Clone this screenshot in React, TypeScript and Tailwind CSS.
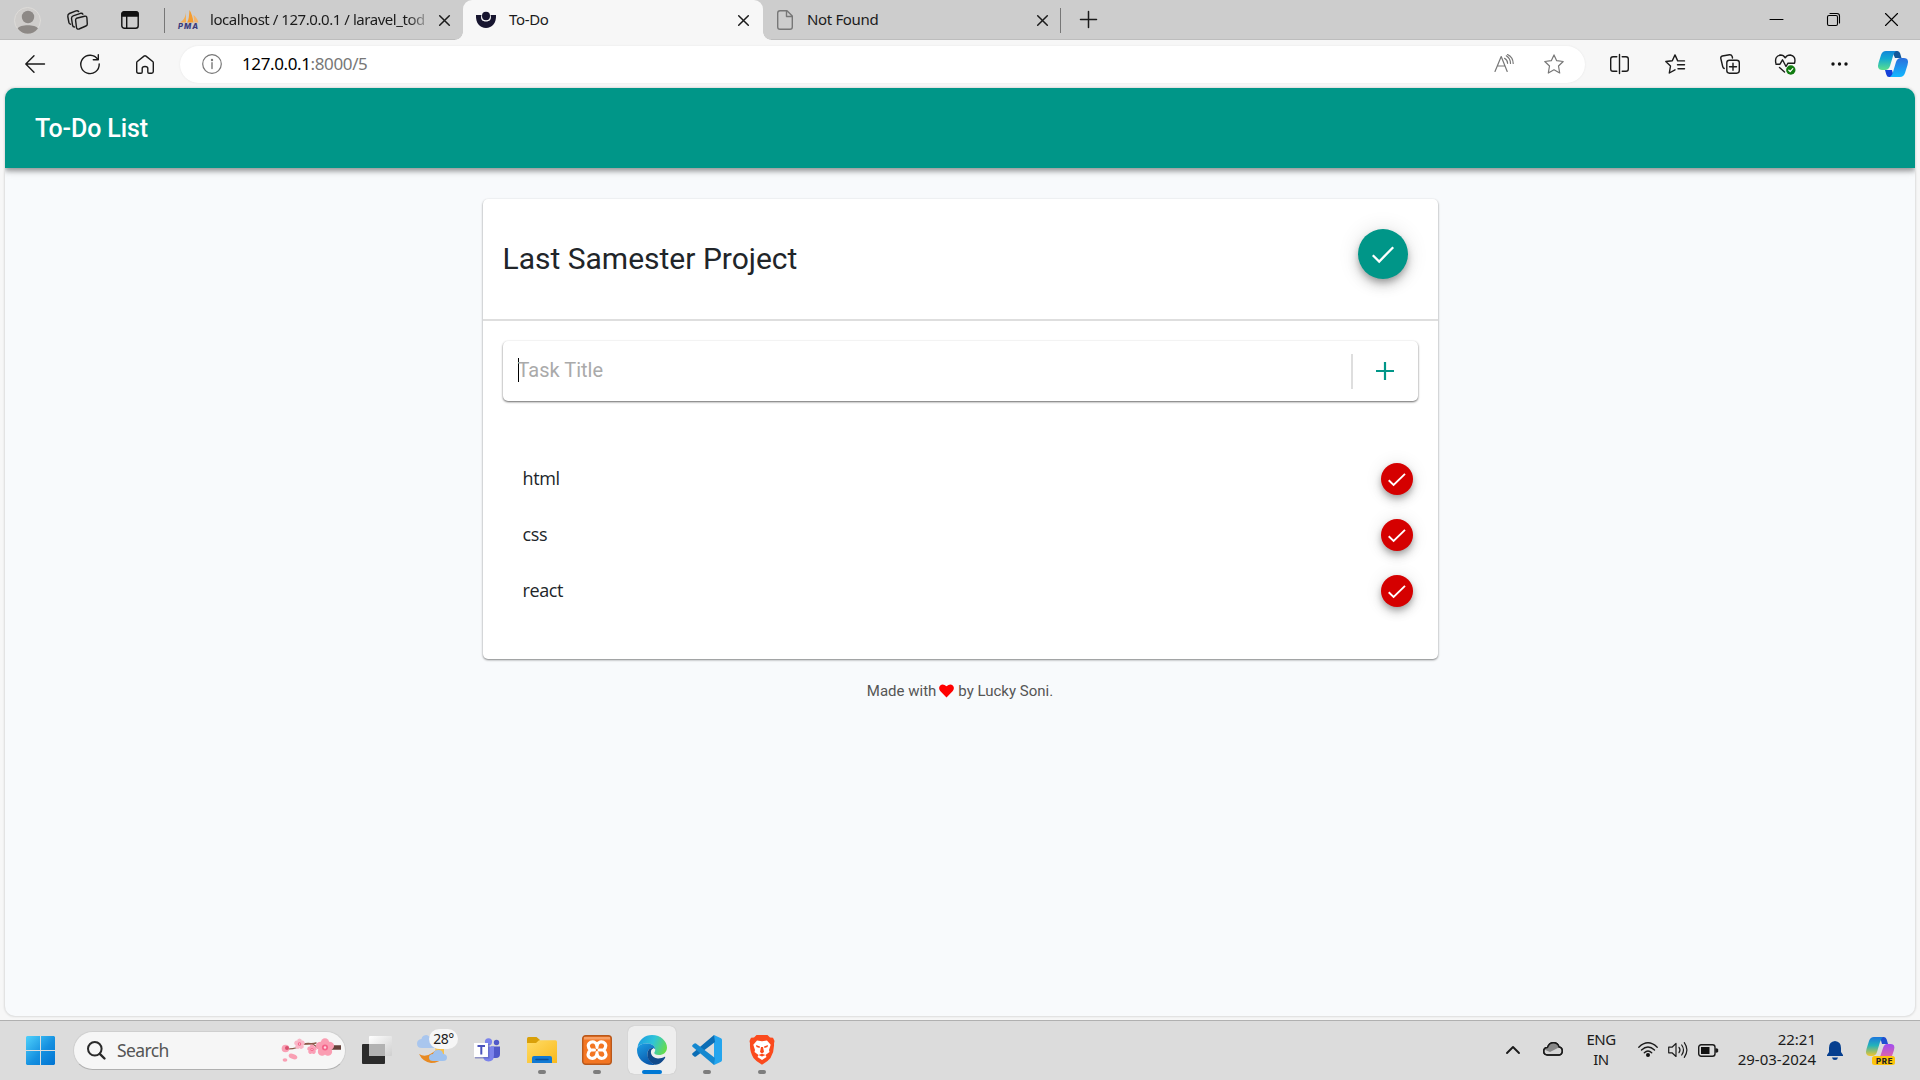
import React from "react";

type IconProps = { w: number; h: number; className?: string; children: React.ReactNode };

function Icon({ w, h, className = "", children }: IconProps) {
  return (
    <svg
      width={w}
      height={h}
      viewBox={`0 0 ${w} ${h}`}
      fill="none"
      stroke="currentColor"
      strokeWidth={1.4}
      strokeLinecap="round"
      strokeLinejoin="round"
      className={`shrink-0 overflow-visible ${className}`}
    >
      {children}
    </svg>
  );
}

function CloseX({ className = "" }: { className?: string }) {
  return (
    <Icon w={11} h={11} className={className}>
      <path d="M0.7 0.7L10.3 10.3M10.3 0.7L0.7 10.3" strokeWidth={1.5} />
    </Icon>
  );
}

function TabStrip() {
  return (
    <div className="flex h-10 items-center bg-[#cdcdcd] text-[15px] text-[#1b1b1b] shadow-[inset_0_-1px_0_#bdbdbd]">
      <Icon w={27} h={27} className="ml-[14px]">
        <circle cx="13.5" cy="13.5" r="13" fill="#cfcdcb" stroke="#dedcd9" strokeWidth={1} />
        <circle cx="14" cy="10" r="6.2" fill="#8d8986" stroke="none" />
        <path d="M3.6 21.5C6 17.3 21.5 17.3 24 21.5C19 28.5 8.500 28.500 3.600 21.500Z" fill="#8d8986" stroke="none" />
      </Icon>
      <Icon w={21} h={20} className="ml-[26px]">
        <path d="M9.500 8.300L17.500 6.200Q19.600 5.800 19.900 7.800L20.300 14Q20.300 15.500 18.900 16L12 19Q9.800 19.600 9.500 17.500L8.600 10.300Q8.500 8.700 9.500 8.300Z" />
        <path d="M7.500 17Q5.900 17 5.600 15.500L4.500 8.500Q4.400 6.400 6.200 5.800L13.500 3.300Q15.300 2.900 15.900 4.200" />
        <path d="M3.500 14.200Q2.100 13.800 1.900 12.500L0.800 6.500Q0.600 4.300 2.400 3.500L9 0.900Q10.900 0.400 11.700 1.600" />
      </Icon>
      <Icon w={18} h={18} className="ml-[33px]">
        <rect x="0.8" y="0.8" width="16.400" height="16.400" rx="2.500" stroke="#111" />
        <path d="M1 5V3Q1 1 3 1H15Q17 1 17 3V5Z" fill="#111" stroke="#111" />
        <path d="M5.700 5.500V17" stroke="#111" />
      </Icon>
      <div className="ml-[25px] h-[25px] w-px bg-[#777]" />
      <Icon w={21} h={20} className="ml-[13px]">
        <path d="M8 0.500C8.200 5 6.500 10 2 12.500H8Z" fill="#f3ae54" stroke="none" />
        <path d="M11.500 0C11 5 11 10 9 12.500H15.500C15 8 13.500 3 11.500 0Z" fill="#f59c2e" stroke="none" />
        <path d="M15.500 5C16 9 16 11 16.500 12.500H20.500C19.500 9 17.500 6.500 15.500 5Z" fill="#f5b468" stroke="none" />
        <text x="0" y="19" fill="#3b3c7c" stroke="none" fontSize="7.600" fontWeight="800" fontStyle="italic" fontFamily="Inter, sans-serif" textLength="20">PMA</text>
      </Icon>
      <div className="mt-[-2px] ml-[11px] w-[220px] whitespace-nowrap [mask-image:linear-gradient(to_right,black_198px,transparent_222px)]">
        <span className="tracking-[-0.450px]">localhost / 127.0.0.1 / laravel_tod</span>
      </div>
      <CloseX className="ml-[9px]" />
      <div className="relative ml-[13px] flex h-10 w-[300px] items-center rounded-t-[9px] bg-[#f7f7f7]">
        <div className="absolute bottom-0 -left-2 size-2 bg-[radial-gradient(circle_at_top_left,#cdcdcd_7.500px,#f7f7f7_8px)]" />
        <div className="absolute -right-2 bottom-0 size-2 bg-[radial-gradient(circle_at_top_right,#cdcdcd_7.500px,#f7f7f7_8px)]" />
        <Icon w={20} h={17} className="ml-[13px]">
          <path d="M0 3H5.500C4 7.500 6.500 9.500 10 9.500S16 7.500 14.500 3H20C20.500 11 16 16 10 16S-0.500 11 0 3Z" fill="#17152f" stroke="none" />
          <ellipse cx="10" cy="4" rx="4" ry="4.200" fill="#17152f" stroke="none" />
        </Icon>
        <span className="mt-[-2px] ml-[13px] tracking-[-0.350px]">To-Do</span>
        <CloseX className="mr-[14px] ml-auto" />
      </div>
      <div className="flex w-[297px] items-center">
        <Icon w={16} h={20} className="ml-[14px] text-[#777]">
          <path d="M3 0.700H10L15.300 6V17Q15.300 19.300 13 19.300H3Q0.700 19.300 0.700 17V3Q0.700 0.700 3 0.700ZM9.500 1V6.500H15" />
        </Icon>
        <span className="mt-[-2px] ml-[14px] tracking-[-0.350px]">Not Found</span>
        <CloseX className="mr-[12px] ml-auto" />
      </div>
      <div className="h-[25px] w-px bg-[#777]" />
      <Icon w={17} h={17} className="mt-[-1px] ml-[19px]">
        <path d="M8.500 0.500V16.500M0.500 8.500H16.500" strokeWidth={1.500} />
      </Icon>
      <Icon w={13} h={13} className="mt-[-1px] ml-auto">
        <path d="M0 6.500H13" strokeWidth={1} stroke="#000" />
      </Icon>
      <Icon w={13} h={13} className="mt-[-1px] ml-[44px]">
        <rect x="0.500" y="2.500" width="10" height="10" rx="1.500" strokeWidth={1.100} stroke="#000" />
        <path d="M3 0.500H10Q12.500 0.500 12.500 3V10" strokeWidth={1.100} stroke="#000" />
      </Icon>
      <Icon w={13} h={13} className="mt-[-1px] mr-[22px] ml-[45px]">
        <path d="M0.500 0.500L12.500 12.500M12.500 0.500L0.500 12.500" strokeWidth={1.100} stroke="#000" />
      </Icon>
    </div>
  );
}

function Toolbar() {
  return (
    <div className="flex h-12 items-center bg-[#f7f7f7] text-[#1b1b1b]">
      <Icon w={20} h={18} className="ml-[25px]">
        <path d="M9 0.700L0.800 9L9 17.300M1 9H19.500" />
      </Icon>
      <Icon w={20} h={20} className="ml-[35px]">
        <path d="M17.800 5.500A9.200 9.200 0 1 0 19.200 10M18.300 0.700V5.800H13.300" />
      </Icon>
      <Icon w={18} h={19} className="ml-[36px]">
        <path d="M0.700 7.800Q0.700 7 1.300 6.500L8 1.100Q9 0.400 10 1.100L16.700 6.500Q17.300 7 17.300 7.800V16.500Q17.300 18.200 15.600 18.200H13Q11.800 18.200 11.800 17V13.500Q11.800 11.500 9 11.500T6.200 13.500V17Q6.200 18.200 5 18.200H2.400Q0.700 18.200 0.700 16.500Z" />
      </Icon>
      <div className="ml-[26px] flex h-[37px] w-[1405px] items-center rounded-full bg-white shadow-[0_0_2px_#e4e4e4] text-[#777]">
        <Icon w={20} h={20} className="ml-[22px]">
          <circle cx="10" cy="10" r="9.300" strokeWidth={1.200} />
          <path d="M10 8.700V14.500" />
          <circle cx="10" cy="6" r="0.500" fill="currentColor" />
        </Icon>
        <div className="mt-[-1px] ml-[20px] text-[17px] tracking-[-0.380px] text-[#777]">
          <span className="text-black">127.0.0.1</span>:8000/5
        </div>
        <Icon w={20} h={19} className="mt-[-1px] ml-auto">
          <path d="M1 17.500L7.200 2.500L13.200 17.500M3.200 12H11M10.500 4.300Q13.500 6 13.600 9.300M12.300 1.800Q16.500 4.500 16.500 9.500M13.500 0.500Q19 3 19.200 9.500" strokeWidth={1.200} />
        </Icon>
        <Icon w={20} h={20} className="mr-[21px] ml-[30px]">
          <path d="M10 0.900L12.700 6.700L19.200 7.500L14.500 12L15.700 19L10 15.800L4.300 19L5.500 12L0.800 7.500L7.300 6.700Z" strokeWidth={1.200} />
        </Icon>
      </div>
      <Icon w={19} h={20} className="ml-[25px]">
        <path d="M9.500 0.500V19.500M6.800 2.700H3Q0.700 2.700 0.700 5V15Q0.700 17.300 3 17.300H6.800M12.200 2.700H16Q18.300 2.700 18.300 5V15Q18.300 17.300 16 17.300H12.200" />
      </Icon>
      <Icon w={20} h={20} className="ml-[36px]">
        <path d="M13.500 6.900H12.700L10 0.900L7.300 6.700L0.800 7.500L5.500 12L4.300 19L10 15.800M13 6.900H19.500M12.500 10.700H19.500M13 14.700H19.500" />
      </Icon>
      <Icon w={20} h={20} className="ml-[35px]">
        <path d="M4.200 14.500Q3 14 2.700 12.500L0.800 4.500Q0.500 2.500 2.300 2L9.500 0.700Q11.500 0.500 12.200 2.500L12.500 4" />
        <rect x="6.800" y="6.200" width="12.500" height="13" rx="2.600" />
        <path d="M13 9.200V16.200M9.500 12.700H16.500" />
      </Icon>
      <Icon w={21} h={20} className="ml-[35px]">
        <path d="M0.800 9Q-0.500 2 5.500 1Q8.500 1 10.200 3.800Q12 1 15.300 1Q21 2 19.700 8.500M1 10.200H5L7.500 5.800L11 12.500L13 9.200H19.500M4.500 13.500L9.500 18" />
        <circle cx="15.800" cy="16" r="4.700" fill="#107c10" stroke="none" />
        <path d="M13.800 16.200L15.200 17.500L17.800 14.700" stroke="white" strokeWidth={1.200} />
      </Icon>
      <Icon w={17} h={4} className="ml-[35px]">
        <g fill="#111" stroke="none">
          <circle cx="2" cy="2" r="1.700" />
          <circle cx="8.500" cy="2" r="1.700" />
          <circle cx="15" cy="2" r="1.700" />
        </g>
      </Icon>
      <Copilot className="ml-[30px]" />
    </div>
  );
}

function Copilot({ className = "" }: { className?: string }) {
  return (
    <Icon w={30} h={26} className={className}>
      <defs>
        <linearGradient id="cpA" x1="0" y1="0" x2="0" y2="1">
          <stop offset="0" stopColor="#1186d8" />
          <stop offset="0.400" stopColor="#12a9d2" />
          <stop offset="1" stopColor="#5ce08c" />
        </linearGradient>
        <linearGradient id="cpB" x1="0" y1="0" x2="0" y2="1">
          <stop offset="0" stopColor="#2b6fdc" />
          <stop offset="1" stopColor="#12b8ff" />
        </linearGradient>
      </defs>
      <g stroke="none">
        <path d="M14 0H19.500Q21.500 0 22.200 2.500L23.500 7H17Z" fill="#15599a" />
        <path d="M16 26H11Q9 26 8.300 23.500L7 19H14Z" fill="#1440d8" />
        <path d="M8 0H18Q16 1 15 5L12 15Q10.700 19 7 19H4Q-1.500 19 0.500 12L3 4Q4.300 0 8 0Z" fill="url(#cpA)" />
        <path d="M22 26H12Q14 25 15 21L18 11Q19.300 7 23 7H26Q31.500 7 29.500 14L27 22Q25.700 26 22 26Z" fill="url(#cpB)" />
      </g>
    </Icon>
  );
}

function TickButton({ small = false }: { small?: boolean }) {
  return small ? (
    <button className="flex size-8 items-center justify-center rounded-full bg-[#d50000] text-white shadow-[0_3px_6px_-1px_rgba(0,0,0,.28),0_6px_10px_rgba(0,0,0,.15),0_1px_18px_rgba(0,0,0,.11)]">
      <Icon w={18} h={13}>
        <path d="M0.700 7.200L5.600 12L17 0.900" strokeWidth={1.900} strokeLinecap="butt" strokeLinejoin="miter" />
      </Icon>
    </button>
  ) : (
    <button className="flex size-[50px] items-center justify-center rounded-full bg-[#009688] text-white shadow-[0_4px_6px_-1px_rgba(0,0,0,.25),0_7px_12px_rgba(0,0,0,.15),0_1px_22px_rgba(0,0,0,.12)]">
      <Icon w={22} h={17}>
        <path d="M0.800 9.200L7.200 15.500L21.200 1.200" strokeWidth={2.300} strokeLinecap="butt" strokeLinejoin="miter" />
      </Icon>
    </button>
  );
}

const tasks = ["html", "css", "react"];

function Page() {
  return (
    <div className="mx-[5px] flex h-[928px] flex-col overflow-hidden rounded-[10px] bg-[#f8fafc] font-['Roboto',sans-serif] shadow-[0_0_2px_1px_#dcdcdc]">
      <header className="relative flex h-20 shrink-0 items-center bg-[#009688] pt-[2px] pl-[30px] text-[25px] font-medium tracking-[-0.100px] text-white shadow-[0_3px_5px_rgba(0,0,0,.35),0_2px_10px_rgba(0,0,0,.12)]">
        To-Do List
      </header>
      <main className="mx-auto mt-[31px] h-[460px] w-[955px] rounded-[5px] bg-white shadow-[0_1px_2px_rgba(0,0,0,.38),0_1px_3px_rgba(0,0,0,.14)]">
        <div className="flex h-[122px] items-start justify-between border-b-2 border-[#dedede] pr-[30px] pl-5">
          <h1 className="mt-[40px] text-[30px] leading-10 text-[#212529]">Last Samester Project</h1>
          <div className="mt-[30px]">
            <TickButton />
          </div>
        </div>
        <div className="mx-5 mt-5 flex h-[60px] items-center rounded-[5px] bg-white shadow-[0_1px_2px_rgba(0,0,0,.5),0_1px_3px_rgba(0,0,0,.14)]">
          <div className="mb-[3px] ml-[15px] h-6 w-px bg-black" />
          <div className="mb-[3px] ml-[-1px] text-xl leading-6 text-[#aaa]">Task Title</div>
          <div className="ml-auto h-[35px] w-0.5 bg-[#dedede]" />
          <Icon w={18} h={18} className="mr-6 ml-[23px] text-[#009688]">
            <path d="M9 0V18M0 9H18" strokeWidth={2.200} strokeLinecap="butt" />
          </Icon>
        </div>
        <ul className="mt-[50px] pr-[25px] pl-10">
          {tasks.map((task) => (
            <li key={task} className="flex h-14 items-center justify-between font-['Open_Sans',sans-serif] text-[18px] text-[#212529]">
              <span className="-mt-px tracking-[-0.400px]">{task}</span>
              <TickButton small />
            </li>
          ))}
        </ul>
      </main>
      <footer className="mt-[21px] flex items-center justify-center text-[15px] leading-[22px] text-[#555]">
        Made with
        <Icon w={15} h={14} className="mr-1 ml-[3px]">
          <path d="M7.500 13.500L1.200 7Q-1 3.800 1.200 1.500Q4 -0.800 7.500 2.300Q11 -0.800 13.800 1.500Q16 3.800 13.800 7Z" fill="#f00" stroke="none" />
        </Icon>
        by Lucky Soni.
      </footer>
    </div>
  );
}

type TaskbarAppProps = { children: React.ReactNode; className: string; running?: boolean; active?: boolean };

function TaskbarApp({ children, className, running, active }: TaskbarAppProps) {
  return (
    <div className={`relative mt-[-1px] flex h-12 w-12 shrink-0 items-center justify-center rounded-md ${active ? "bg-[#eeeeee] shadow-[0_0_1px_#aaa]" : ""} ${className}`}>
      {children}
      {running && <div className={`absolute bottom-0 h-1 rounded-full ${active ? "w-5 bg-[#0078d4]" : "w-2 bg-[#7d7d7d]"}`} />}
    </div>
  );
}

function Blossom() {
  const flower = (x: number, y: number, r: number, c: string) => (
    <g transform={`translate(${x} ${y}) scale(${r})`} stroke="none">
      {[0, 72, 144, 216, 288].map((a) => (
        <ellipse key={a} cx="0" cy="-0.520" rx="0.440" ry="0.460" fill={c} transform={`rotate(${a})`} />
      ))}
      <circle r="0.320" fill="#f4648a" />
      <circle r="0.130" fill="#ffd5df" />
    </g>
  );
  return (
    <Icon w={61} h={25} className="ml-auto mr-[3px]">
      <path d="M4 10.500Q14 12 22 6.500Q30 3 37 10" stroke="#8b5a4a" strokeWidth={1.300} />
      <path d="M22 6Q32 6 35 5" stroke="#8b5a4a" />
      <path d="M50 9.500H60" stroke="#634039" strokeWidth={4.500} strokeLinecap="butt" />
      {flower(18.500, 6, 5.500, "#f9b7c7")}
      {flower(31, 11.500, 5, "#fa9fb6")}
      {flower(44, 9.500, 9.500, "#fa9db2")}
      <g stroke="none" fill="#f9a0b4">
        <circle cx="4.500" cy="10.500" r="3.800" />
        <circle cx="6" cy="10" r="2" fill="#d8506e" />
        <ellipse cx="4" cy="22" rx="2.400" ry="1.800" />
        <ellipse cx="12" cy="18.500" rx="4.500" ry="2.500" transform="rotate(20 12 18.500)" />
      </g>
    </Icon>
  );
}

function Taskbar() {
  return (
    <div className="mt-1 flex h-[60px] items-center border-t border-[#b0b0b0] bg-[#dcdcdc] text-[#1b1b1b]">
      <Icon w={29} h={29} className="ml-[26px]">
        <defs>
          <linearGradient id="win" x1="0" y1="0" x2="29" y2="29" gradientUnits="userSpaceOnUse">
            <stop stopColor="#4fd1fb" />
            <stop offset="0.550" stopColor="#1590e0" />
            <stop offset="1" stopColor="#0073d2" />
          </linearGradient>
        </defs>
        <g fill="url(#win)" stroke="none">
          <path d="M1 0H14V14H0V1ZM15 0H28L29 1V14H15ZM0 15H14V29H1L0 28ZM15 15H29V28L28 29H15Z" />
        </g>
      </Icon>
      <div className="mt-[-1px] ml-[18px] flex h-[39px] w-[273px] shrink-0 items-center rounded-full border border-[#cfcfcf] border-b-[#b0b0b0] bg-[#f6f6f6]">
        <Icon w={19} h={19} className="ml-[13px]">
          <circle cx="7.800" cy="7.800" r="6.800" strokeWidth={2} stroke="#2a2a2a" />
          <path d="M12.800 12.800L17.500 17.500" strokeWidth={2.400} stroke="#2a2a2a" />
        </Icon>
        <span className="ml-[11px] text-[17.500px] tracking-[-0.600px] text-[#555]">Search</span>
        <Blossom />
      </div>
      <Icon w={30} h={29} className="ml-[16px]">
        <defs>
          <linearGradient id="tv" x1="0" y1="0" x2="1" y2="1">
            <stop stopColor="#fff" />
            <stop offset="1" stopColor="#cfcfcf" />
          </linearGradient>
        </defs>
        <rect x="0" y="8" width="23" height="20" rx="1" fill="#2b2b2b" stroke="none" />
        <rect x="7" y="0" width="23" height="20" rx="1" fill="url(#tv)" stroke="none" />
        <rect x="7" y="8" width="16" height="12" fill="#b2b2b2" stroke="none" />
      </Icon>
      <div className="relative mt-[-6px] ml-[25px] h-[38px] w-[41px] shrink-0">
        <Icon w={41} h={38}>
          <g stroke="none">
            <path d="M5 19Q0 19 0 14.500Q0 10.500 4.500 10Q5 6 10 6L22 14V19Z" fill="#a9c6ee" />
            <path d="M2 25Q8 29 15 24Q22 19 27 17V28Q22 34 14 34Q6 33 2 25Z" fill="#e88a22" />
            <path d="M18 19Q24 22 27 17V28L20 27Z" fill="#f7c14c" />
            <path d="M16 32Q12 32 12 28.500Q12 25 16 25Q17 21 21.500 21Q25.500 21 26 25Q30 25 30 28.500Q30 32 26 32Z" fill="#9fc2ef" />
          </g>
        </Icon>
        <span className="absolute top-0 right-0 flex h-5 w-[29px] items-center justify-center rounded-full bg-[#f6f6f6] text-[14px] tracking-[-0.500px]">28°</span>
      </div>
      <TaskbarApp className="ml-[5px]">
        <Icon w={26} h={24}>
          <g stroke="none">
            <circle cx="14.500" cy="3.800" r="3.600" fill="#7b83eb" />
            <circle cx="22.500" cy="4.500" r="2.700" fill="#5059c9" />
            <path d="M17 8.500H26V16Q26 20 22 20H17Z" fill="#5059c9" />
            <path d="M9 8.500H20V17Q20 23.500 14.500 23.500Q9 23.500 9 17Z" fill="#7b83eb" />
            <rect x="1" y="6" width="14.500" height="14.500" fill="#5c62b8" opacity="0.600" />
            <rect x="0" y="5" width="14" height="14" fill="#fff" />
            <path d="M3.500 8H11M7.300 8V16.500" stroke="#4b53bc" strokeWidth={2} strokeLinecap="butt" />
          </g>
        </Icon>
      </TaskbarApp>
      <TaskbarApp className="ml-[7px]" running>
        <Icon w={30} h={26}>
          <defs>
            <linearGradient id="fold" x1="0" y1="0" x2="1" y2="1">
              <stop stopColor="#ffdc66" />
              <stop offset="1" stopColor="#f9b91c" />
            </linearGradient>
          </defs>
          <g stroke="none">
            <path d="M0 1.500Q0 0 1.500 0H9.500L13 3V8H0Z" fill="#d9a009" />
            <path d="M0 6H9L12 3.300H28.500Q30 3.300 30 5V26H0Z" fill="url(#fold)" />
            <path d="M5 26V21Q5 19 7 19H23Q25 19 25 21V26Z" fill="#1179d3" />
            <path d="M9 22.500H21" stroke="#0a4f98" strokeWidth={1.500} />
          </g>
        </Icon>
      </TaskbarApp>
      <TaskbarApp className="ml-[7px]" running>
        <Icon w={30} h={30}>
          <rect x="0.700" y="0.700" width="28.600" height="28.600" rx="3" fill="#f37623" stroke="#b9581b" />
          <path d="M2 2H28V4.500H2Z" fill="#f7a066" stroke="none" />
          <path d="M15 10.500C13.500 6.500 10.500 6.500 8.500 7.300C5.500 9 5.500 12.500 8.500 15C5.500 17.500 5 21.500 8.500 23C11.500 24 14 22.500 15 19.500C16 22.500 18.500 24 21.500 23C25 21.500 24.500 17.500 21.500 15C24.500 12.500 24.500 9 21.500 7.300C19.500 6.500 16.500 6.500 15 10.500Z" stroke="#fff" strokeWidth={3.200} />
          <path d="M10 15H12.500M17 15H20M15 10.500V12.500M15 17.500V19.500" stroke="#fff" strokeWidth={3} />
        </Icon>
      </TaskbarApp>
      <TaskbarApp className="ml-[7px]" running active>
        <Icon w={30} h={30}>
          <defs>
            <linearGradient id="edTop" x1="0" y1="0.300" x2="1" y2="0.600">
              <stop stopColor="#1b9de2" />
              <stop offset="0.500" stopColor="#2fc4d8" />
              <stop offset="1" stopColor="#66dc4a" />
            </linearGradient>
            <linearGradient id="edBot" x1="0" y1="0" x2="0.500" y2="1">
              <stop stopColor="#1d9fe4" />
              <stop offset="1" stopColor="#0a59ad" />
            </linearGradient>
          </defs>
          <g stroke="none">
            <path d="M0.500 12C2 4.500 8 0 15 0C24 0 30 6.500 30 12.500C30 17.500 26 20 22 20C18.500 20 17 18.700 17.300 17.500C19.500 15 18 10 12.500 8.800C7 8 2.500 9.500 0.500 12Z" fill="url(#edTop)" />
            <path d="M0 15C0 10 5 8.500 10 8.500C15 8.500 18 11 18.300 14.500C16 11.800 11 13 10.500 18C10.300 23.500 13 28 18.500 29.700C8 31.500 0 24 0 15Z" fill="url(#edBot)" />
            <path d="M10.500 18C11 14 14 12.500 16.500 13.300C11.500 15 14 23.500 21 23.500C24 23.500 26 22.700 27.300 22C28 21.600 28.500 22.200 28 23C25.500 27.500 21 30 18.500 29.700C12.500 28 10 23.500 10.500 18Z" fill="#114a8b" />
          </g>
        </Icon>
      </TaskbarApp>
      <TaskbarApp className="ml-[7px]" running>
        <Icon w={30} h={30}>
          <g stroke="none">
            <path d="M22 0L29 3.300Q30 3.800 30 5V25Q30 26.200 29 26.700L22 30Z" fill="#24a5ee" />
            <path d="M22 0L23 7L4 21.500Q3 22.200 2 21.300L0.500 20Q-0.300 19 0.500 18.200Z" fill="#0b6db5" />
            <path d="M22 30L23 23L4 8.500Q3 7.800 2 8.700L0.500 10Q-0.300 11 0.500 11.800Z" fill="#1488d0" />
          </g>
        </Icon>
      </TaskbarApp>
      <TaskbarApp className="ml-[7px]" running>
        <Icon w={26} h={30}>
          <g stroke="none">
            <path d="M7.500 0H18.500L21 2.500L24 2.700L25.500 6L25 8.500Q25.500 16 21.500 23Q19 26.500 13 29.700Q7 26.500 4.500 23Q0.500 16 1 8.500L0.500 6L2 2.700L5 2.500Z" fill="#fb4a1d" />
            <path d="M8 5.500L13 6.300L18 5.500L21.700 9.800L20 15L20.500 17L16.500 20L17.500 22L13 25L8.500 22L9.500 20L5.500 17L6 15L4.300 9.800Z" fill="#fff" />
            <path d="M7 10L11 11.500L10.500 13L7.500 12ZM19 10L15 11.500L15.500 13L18.500 12ZM12 12H14L15 17L13 18.500L11 17ZM9.500 20L13 18.800L16.500 20L13 21.500Z" fill="#fb4a1d" />
          </g>
        </Icon>
      </TaskbarApp>
      <Icon w={14} h={8} className="mt-[-1px] ml-auto">
        <path d="M1 7L7 1L13 7" strokeWidth={1.900} />
      </Icon>
      <Icon w={20} h={14} className="mt-[-3px] ml-[23px]">
        <path d="M4.500 13Q0.700 13 0.700 9.300T4.500 5.500Q6 0.700 10.500 0.700T16 5Q19.300 5.500 19.300 9T16 13Z" fill="#d5d5d5" />
        <path d="M1.200 7.500Q2 5.500 4.500 5.500Q6 0.900 10.500 0.900T15.800 5.500L7 10Z" fill="#888" stroke="none" />
        <path d="M4.500 13Q0.700 13 0.700 9.300T4.500 5.500Q6 0.700 10.500 0.700T16 5Q19.300 5.500 19.300 9T16 13Z" />
      </Icon>
      <div className="mt-[-3px] ml-[18px] w-10 text-center text-[15px] leading-5 tracking-[-0.500px]">
        ENG
        <br />
        IN
      </div>
      <Icon w={20} h={15} className="mt-[-2px] ml-[17px]">
        <path d="M0.800 5.200Q10 -3.500 19.200 5.200M3.500 8Q10 1.800 16.500 8M6.300 10.700Q10 7.200 13.700 10.700" />
        <circle cx="10" cy="13" r="2" fill="#111" stroke="none" />
      </Icon>
      <Icon w={20} h={16} className="mt-[-2px] ml-[10px]">
        <path d="M0.700 5.200H4L8 1.500V14.500L4 10.800H0.700ZM11 5.300Q13 8 11 10.700M13.700 3Q17.300 8 13.700 13M16.300 0.700Q21.500 8 16.300 15.300" strokeWidth={1.200} />
      </Icon>
      <Icon w={20} h={13} className="mt-[-1px] ml-[10px]">
        <rect x="0.700" y="0.700" width="16.300" height="11.600" rx="2.500" />
        <rect x="3" y="3" width="8.500" height="7" fill="#111" stroke="none" />
        <path d="M18 5V8L19.500 7.500V5.500Z" fill="#111" />
      </Icon>
      <div className="mt-[-4px] ml-[10px] w-[88px] text-right text-[15px] leading-5 whitespace-nowrap">
        22:21
        <br />
        29-03-2024
      </div>
      <Icon w={16} h={19} className="mt-[-1px] ml-[11px]">
        <path d="M8 0Q14 0.500 14 7V11L16 14V15H0V14L2 11V7Q2 0.500 8 0ZM5 16.500H11Q10.500 19 8 19T5 16.500Z" fill="#063f8f" stroke="none" />
      </Icon>
      <Icon w={29} h={28} className="mr-[25px] ml-[23px]">
        <defs>
          <linearGradient id="preA" x1="0" y1="0" x2="0" y2="1">
            <stop stopColor="#1b76dc" />
            <stop offset="0.450" stopColor="#23b3ba" />
            <stop offset="1" stopColor="#f4c62c" />
          </linearGradient>
          <linearGradient id="preB" x1="0" y1="0" x2="0" y2="1">
            <stop stopColor="#a14cf0" />
            <stop offset="1" stopColor="#f7708c" />
          </linearGradient>
        </defs>
        <g stroke="none">
          <path d="M14 0H18Q20 0 20.700 2.500L22 7H16Z" fill="#1f4fd0" />
          <path d="M8 0H17Q15.500 1 14 5L11 15Q9.800 19 6 19H4Q-1.500 19 0.500 12L3 4Q4.300 0 8 0Z" fill="url(#preA)" />
          <path d="M12 25Q13 24 14 20L17 11Q18.300 7 21 7H25Q29.500 7 28 13L25 22L20 25Z" fill="url(#preB)" />
          <rect x="6" y="19" width="23" height="9" rx="2.500" fill="#fcc40c" />
          <text x="10" y="26.500" fontSize="7.800" fontWeight="800" fill="#222" fontFamily="Inter, sans-serif" textLength="16.500">PRE</text>
        </g>
      </Icon>
    </div>
  );
}

export default function App() {
  return (
    <div className="h-[1080px] w-[1920px] overflow-hidden bg-[#f7f7f7] font-['Noto_Sans',sans-serif]">
      <TabStrip />
      <Toolbar />
      <Page />
      <Taskbar />
    </div>
  );
}
